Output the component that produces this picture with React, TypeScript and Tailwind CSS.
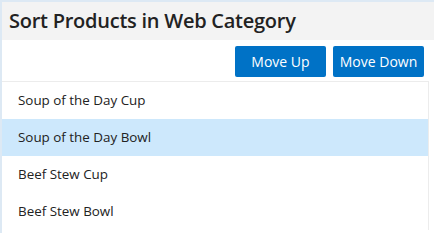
import React from 'react';

const items = ['Soup of the Day Cup', 'Soup of the Day Bowl', 'Beef Stew Cup', 'Beef Stew Bowl'];

export default function App() {
  const selected = 1;
  return (
    <div className="w-[434px] h-[233px] overflow-hidden bg-white border-t-2 border-l-2 border-[#dde9f4] font-['Open_Sans',sans-serif] text-[#222]">
      {/* Titulo */}
      <div className="h-[38px] bg-[#f3f3f3] flex items-center pl-[7px]">
        <h1 className="text-[20px] font-semibold tracking-[-0.25px]">Sort Products in Web Category</h1>
      </div>

      {/* Botones */}
      <div className="flex justify-end gap-[7px] pt-[6px] pr-[10px] h-[41px]">
        <button className="w-[91px] h-[31px] rounded-[2px] bg-[#0072c6] text-white text-[14px]">Move Up</button>
        <button className="w-[91px] h-[31px] rounded-[2px] bg-[#0072c6] text-white text-[14px]">Move Down</button>
      </div>

      {/* Lista */}
      <ul className="mr-[5px] border-t border-r border-[#ececec]">
        {items.map((item, i) => (
          <li
            key={item}
            className={`h-[37px] flex items-center pl-[16px] text-[13.4px] ${i === selected ? 'bg-[#cde8fc]' : 'bg-white'}`}
          >
            {item}
          </li>
        ))}
      </ul>
    </div>
  );
}
